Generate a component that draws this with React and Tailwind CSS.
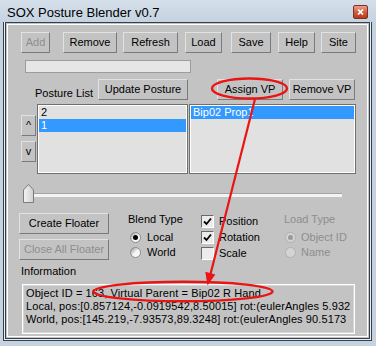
import React from "react";

function Btn({ className = "", disabled, children }) {
  return (
    <div
      className={
        "h-[21px] shrink-0 flex items-center justify-center whitespace-nowrap border border-t-[#e2e2e2] border-l-[#e2e2e2] border-r-[#7a7a7a] border-b-[#7a7a7a] bg-[#c3c3c3] " +
        (disabled ? "text-[#8e8e8e] " : "text-black ") +
        className
      }
    >
      {children}
    </div>
  );
}

function ListBox({ className = "", items, selected }) {
  return (
    <div className={"h-[70px] border border-[#6f6f6f] " + className}>
      <div className="h-full border border-white bg-[#e1e1e1]">
        {items.map((it, i) => (
          <div
            key={it}
            className={
              i === selected
                ? "h-[13px] pl-[2px] bg-[#3399ff] text-white"
                : "h-[13px] pl-[2px] text-black"
            }
          >
            {it}
          </div>
        ))}
      </div>
    </div>
  );
}

function Radio({ checked, disabled }) {
  return (
    <span
      className={
        "relative w-[11px] h-[11px] rounded-full border flex items-center justify-center shrink-0 " +
        (disabled
          ? "border-[#b0b0b0] bg-[#d4d4d4]"
          : "border-[#8a8a8a] bg-gradient-to-br from-[#9a9a9a] via-[#f4f4f4] to-white")
      }
    >
      {checked && (
        <span
          className={
            "w-[5px] h-[5px] rounded-full " +
            (disabled ? "bg-[#9a9a9a]" : "bg-black")
          }
        />
      )}
    </span>
  );
}

function Check({ checked }) {
  return (
    <span className="w-[13px] h-[13px] shrink-0 border border-t-[#6a6a6a] border-l-[#6a6a6a] border-r-white border-b-white bg-[#ececec] flex items-center justify-center">
      {checked && (
        <svg width="9" height="9" viewBox="0 0 9 9">
          <polyline
            points="1,4.5 3.5,7 8,1.5"
            fill="none"
            stroke="#000"
            strokeWidth="1.8"
          />
        </svg>
      )}
    </span>
  );
}

export default function App() {
  return (
    <div className="relative w-[376px] h-[346px] overflow-hidden bg-[#c6d3df] font-['Liberation_Sans',Arial,sans-serif] text-[11px] leading-[13px] text-black">
      {/* title bar */}
      <div className="h-[22px] flex items-start bg-gradient-to-b from-[#d4dfea] to-[#c5d3e0]">
        <span className="ml-[7px] mt-[5px] text-[13px] leading-[15px]">
          SOX Posture Blender v0.7
        </span>
        <div className="ml-auto mr-[8px] mt-[5px] w-[15px] h-[14px] rounded-[2px] border border-[#7a3222] bg-gradient-to-b from-[#eba08a] via-[#d45c3e] to-[#b8381e] flex items-center justify-center">
          <svg width="7" height="6" viewBox="0 0 7 6">
            <path d="M1 0.5 L6 5.5 M6 0.5 L1 5.5" stroke="#fff" strokeWidth="1.7" />
          </svg>
        </div>
      </div>

      {/* window frame */}
      <div className="ml-[3px] mr-[4px] h-[319px] border border-t-0 border-[#34404c]">
        <div className="h-full border border-t-0 border-[#e9eef3]">
          <div className="h-full border border-[#34404c] bg-[#c3c3c3] p-px">
            <div className="h-full border border-white flex flex-col">
              {/* buttons row */}
              <div className="mt-[7px] ml-[13px] flex">
                <Btn disabled className="w-[29px]">Add</Btn>
                <Btn className="ml-[13px] w-[54px]">Remove</Btn>
                <Btn className="ml-[6px] w-[55px]">Refresh</Btn>
                <Btn className="ml-[7px] w-[37px]">Load</Btn>
                <Btn className="ml-[9px] w-[40px]">Save</Btn>
                <Btn className="ml-[7px] w-[37px]">Help</Btn>
                <Btn className="ml-[6px] w-[35px]">Site</Btn>
              </div>

              {/* progress field */}
              <div className="mt-[7px] ml-[17px] w-[166px] h-[13px] border border-[#9c9c9c] bg-[#e6e6e6]" />

              {/* posture list header */}
              <div className="mt-[6px] flex items-end">
                <span className="ml-[27px] w-[63px] h-[13px]">Posture List</span>
                <Btn className="w-[90px]">Update Posture</Btn>
                <Btn className="ml-[29px] w-[66px]">Assign VP</Btn>
                <Btn className="ml-[6px] w-[66px]">Remove VP</Btn>
              </div>

              {/* lists */}
              <div className="mt-[4px] flex">
                <div className="ml-[13px] w-[15px] flex flex-col">
                  <Btn className="mt-[11px] w-[15px]">^</Btn>
                  <Btn className="mt-[5px] w-[15px]">v</Btn>
                </div>
                <ListBox className="ml-[1px] w-[151px]" items={["2", "1"]} selected={1} />
                <ListBox className="ml-[1px] w-[167px]" items={["Bip02 Prop1"]} selected={0} />
              </div>

              {/* slider */}
              <div className="relative mt-[10px] ml-[15px] w-[319px] h-[19px]">
                <div className="ml-[9px] mt-[9px] h-[4px] border-t border-[#a4a4a4] bg-[#f3f3f3]" />
                <svg className="absolute left-0 top-0" width="11" height="19" viewBox="0 0 11 19">
                  <defs>
                    <linearGradient id="th" x1="0" y1="0" x2="1" y2="0">
                      <stop offset="0" stopColor="#f4f4f4" />
                      <stop offset="1" stopColor="#cfcfcf" />
                    </linearGradient>
                  </defs>
                  <polygon
                    points="0.5,6 5.5,0.5 10.5,6 10.5,18.5 0.5,18.5"
                    fill="url(#th)"
                    stroke="#7c7c7c"
                  />
                </svg>
              </div>

              {/* options */}
              <div className="mt-[10px] flex">
                <div className="ml-[11px] w-[90px] flex flex-col">
                  <Btn className="w-[90px]">Create Floater</Btn>
                  <Btn disabled className="mt-[5px] w-[90px]">Close All Floater</Btn>
                </div>
                <div className="ml-[19px] w-[73px] flex flex-col">
                  <span className="h-[13px]">Blend Type</span>
                  <div className="mt-[5px] h-[13px] flex items-center">
                    <span className="ml-[2px]"><Radio checked /></span>
                    <span className="ml-[6px]">Local</span>
                  </div>
                  <div className="mt-[2px] h-[13px] flex items-center">
                    <span className="ml-[2px]"><Radio /></span>
                    <span className="ml-[6px]">World</span>
                  </div>
                </div>
                <div className="w-[83px] flex flex-col">
                  <div className="h-[16px] flex items-center">
                    <Check checked />
                    <span className="ml-[5px]">Position</span>
                  </div>
                  <div className="h-[16px] flex items-center">
                    <Check checked />
                    <span className="ml-[5px]">Rotation</span>
                  </div>
                  <div className="h-[16px] flex items-center">
                    <Check />
                    <span className="ml-[5px]">Scale</span>
                  </div>
                </div>
                <div className="flex flex-col text-[#8e8e8e]">
                  <span className="h-[13px]">Load Type</span>
                  <div className="mt-[5px] h-[13px] flex items-center">
                    <span className="ml-[1px]"><Radio checked disabled /></span>
                    <span className="ml-[5px]">Object ID</span>
                  </div>
                  <div className="mt-[2px] h-[13px] flex items-center">
                    <span className="ml-[1px]"><Radio disabled /></span>
                    <span className="ml-[5px]">Name</span>
                  </div>
                </div>
              </div>

              {/* information */}
              <span className="mt-[4px] ml-[13px] h-[13px]">Information</span>
              <div className="mt-[6px] ml-[14px] w-[333px] h-[50px] border border-white">
                <div className="h-full border border-[#d6d6d6] pt-px pl-[2px] whitespace-nowrap overflow-hidden tracking-[0.1px]">
                  <div>Object ID = 163, Virtual Parent = Bip02 R Hand</div>
                  <div>Local, pos:[0.857124,-0.0919542,8.50015] rot:(eulerAngles 5.932</div>
                  <div>World, pos:[145.219,-7.93573,89.3248] rot:(eulerAngles 90.5173</div>
                </div>
              </div>
            </div>
          </div>
        </div>
      </div>

      {/* red annotation */}
      <svg className="absolute left-0 top-0 pointer-events-none" width="376" height="346" viewBox="0 0 376 346">
        <ellipse cx="249.5" cy="88.5" rx="37.5" ry="10" fill="none" stroke="#ea1414" strokeWidth="2.4" />
        <ellipse cx="183" cy="291.5" rx="89.5" ry="9.8" fill="none" stroke="#ea1414" strokeWidth="2.4" />
        <line x1="255" y1="99" x2="210" y2="276" stroke="#ea1414" strokeWidth="2.2" />
        <polygon points="207.5,285.5 215.3,274.4 205.3,271.8" fill="#ea1414" />
      </svg>
    </div>
  );
}
